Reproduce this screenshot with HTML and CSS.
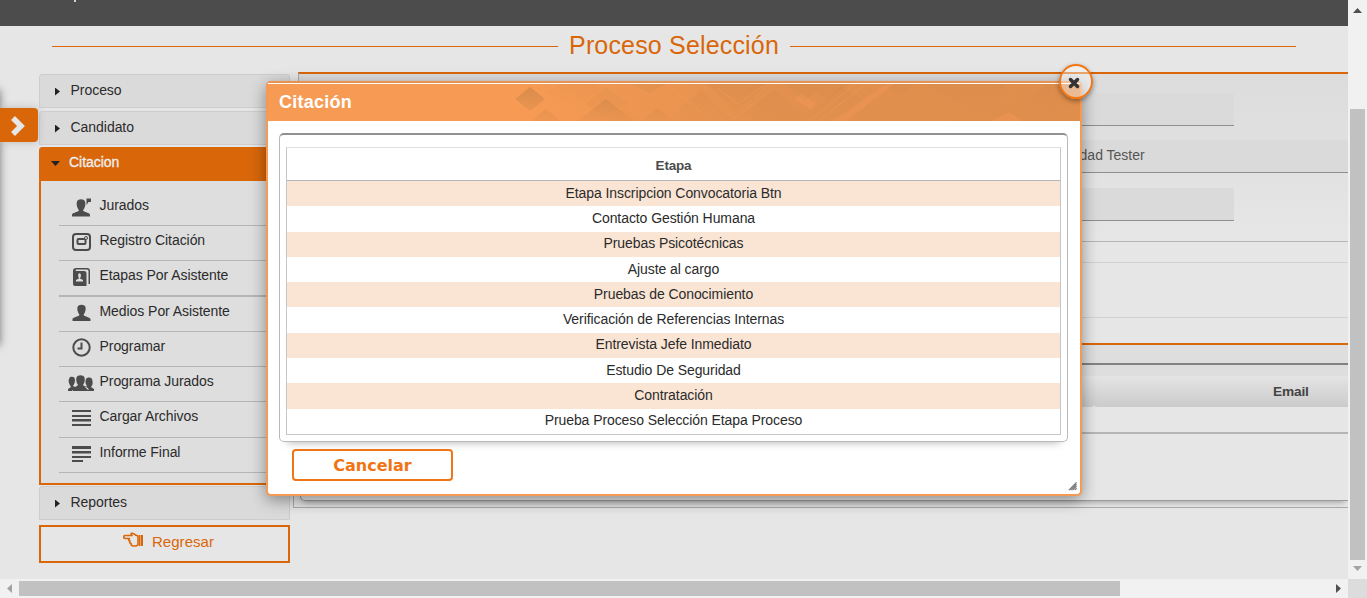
FILE: index.html
```html
<!DOCTYPE html>
<html lang="es">
<head>
<meta charset="utf-8">
<title>Proceso Selección</title>
<link rel="stylesheet" href="styles.css">
</head>
<body>
<div class="window">
  <div class="page">
    <header class="topbar"><span class="topbar-mark"></span></header>
    <div class="page-title"><h1>Proceso Selección</h1></div>
    <div class="columns">
      <nav class="sidebar">
        <a class="group"><i class="caret"></i>Proceso</a>
        <a class="group second"><i class="caret"></i>Candidato</a>
        <a class="group active"><i class="caret down"></i>Citacion</a>
        <ul class="submenu">
          <li><svg viewBox="0 0 26 20"><path d="M4 19.500v-2c1-2 5-2 7-4-2-3-3-6-2-9 1-3 7-3 8 0 1 3 0 6-2 9 2 2 6 2 7 4v2zM18.500 1.500H23V5h-2.500l-2 3z"/></svg>Jurados</li>
          <li><svg viewBox="0 0 26 20"><rect class="ln" x="5" y="2" width="17" height="16" rx="3"/><rect class="ln" x="9.500" y="7" width="8" height="5" rx="1"/><circle class="thin" cx="18" cy="6" r="1.500"/></svg>Registro Citación</li>
          <li><svg viewBox="0 0 26 20"><path d="M5 4q0-3 3-3h11q3 0 3 3v13h-1.500V4q0-1.500-1.500-1.500H8Q7 3.200 8 4h8q2.500 0 2.500 2v13H7q-2 0-2-2z"/><path class="cut" d="M8 14.500V13l3-1.500q-1.300-3-.7-4.500.9-1.500 2.400 0 .8 1.500-.7 4.500l3 1.500v1.500z"/></svg>Etapas Por Asistente</li>
          <li><svg viewBox="0 0 26 20"><path d="M4.500 18v-2c1-2 5-2 7-4-2-3-2.500-6-2-8 1-3 7-3 8 0 .5 2 0 5-2 8 2 2 6 2 7 4v2z"/></svg>Medios Por Asistente</li>
          <li><svg viewBox="0 0 26 20"><circle class="ln" cx="13.500" cy="9.500" r="8.200"/><path class="ln" d="M13.500 4.500v6H9.500"/></svg>Programar</li>
          <li><svg viewBox="0 0 26 20"><path d="M5 18v-2c1-2 3-2 5-4-2-3-2-5-1.500-7.500 1-3 7-3 8 0 .5 2.500.5 4.500-1.500 7.500 2 2 4.500 2 5.500 4v2zM0 18v-2l3-2C1 11 0 8 1 6l1-2c3-1 5 0 5 3s-1 4-2 6l2 1-3 4zM26 18v-2l-3-2c2-2 2-5 1-8-1-2-5-2-6 0-1 3-.5 5 1 7l-2 1 4 4z"/></svg>Programa Jurados</li>
          <li><svg viewBox="0 0 26 20"><path d="M4 2h19v2H4zM4 7h19v2H4zM4 11h19v2.500H4zM4 16h19v2H4z"/></svg>Cargar Archivos</li>
          <li><svg viewBox="0 0 26 20"><path d="M4 2h19v3H4zM4 7h19v2.500H4zM4 12h19v2H4zM4 16h11v2H4z"/></svg>Informe Final</li>
        </ul>
        <a class="group reports"><i class="caret"></i>Reportes</a>
        <a class="back"><svg viewBox="0 0 20 16"><path d="M9 3.500H2.500C0 3.500 0 6.500 2.500 6.500H7c-2 .7-1.500 2.500 0 2.700-.8 1.500 0 2.200 1 2.300 0 1.700.8 2.500 2.500 2.500H13l2-1V4l-2.500-1C11 1.500 9.500 1 8.500 1.300 7.500 2 9 3 9 3.500z"/><path class="cuff" d="M16 3h1.500v11H16zM18 3h2v11h-2z"/></svg>Regresar</a>
      </nav>
      <main class="content">
        <section class="form-panel">
          <div class="field short"></div>
          <div class="field full">Universidad Tester</div>
          <div class="field short third"></div>
        </section>
        <div class="band band-a"></div>
        <div class="band band-b"></div>
        <div class="band band-c"></div>
        <section class="list-panel">
          <div class="list-box">
            <div class="list-head"><div class="th"></div><div class="th email">Email</div></div>
            <div class="list-line"></div>
          </div>
        </section>
      </main>
    </div>

    <div class="drawer-shade"></div>
    <button class="drawer-tab"><svg viewBox="0 0 16 22"><path d="M3 3l8 8-8 8"/></svg></button>

    <div class="dialog">
      <div class="dialog-head">
        <svg class="pattern" viewBox="0 0 564 37" preserveAspectRatio="none">
          <defs>
            <linearGradient id="fade"><stop offset="0" stop-color="#d98b4b" stop-opacity="0"/><stop offset=".45" stop-color="#db8c4c" stop-opacity=".7"/><stop offset="1" stop-color="#db8b4a" stop-opacity=".85"/></linearGradient>
            <linearGradient id="dn" x2="0" y2="1"><stop offset="0" stop-color="#cb8548" stop-opacity=".7"/><stop offset="1" stop-color="#dd8c4c" stop-opacity=".25"/></linearGradient>
          </defs>
          <path fill="url(#fade)" d="M0 0h564v37H0z"/>
          <g fill="url(#dn)">
            <path d="M-1 15L14 3l15 12-15 12zM15 37l15-12 15 12z"/>
            <path opacity=".8" d="M62 37l28-22 28 22zM126 37l15-13 16 13z"/>
            <path opacity=".35" d="M69 20L90 3l22 16-22 15zM115 0h36l-18 9zM88 37l20-13 18 13z"/>
            <path opacity=".15" d="M30 8L45 0h35l6 6-20 12-12 5z"/>
            <path opacity=".4" d="M150 37l36-32 35 32zM190 0h60l-29 28zM225 33l31-28 33 27-14 5h-36zM270 0h62l-20 16-12-8-12 10z"/>
            <path opacity=".3" d="M282 37l44-35 50 35zM353 37l20-19 24 19zM366 0h34l-17 12zM410 0h78l-8 20-15 12zM465 32l18-15 16 13 30-30h35v5l-35 32h-14l-14-9-14 9z"/>
          </g>
          <path fill="#fa9c58" opacity=".35" d="M476 37l17-9 13 9zM286 10l14 10-6 5-16-10zM330 28l40-28h8l-48 37h-14z"/>
          <path fill="none" stroke="#fa9c58" stroke-width=".7" opacity=".6" d="M184 6l34 29 39-30M150 0l40 32M292 37l48-37M302 37l48-37M201 4l21 16 25-18"/>
        </svg>
        <h2>Citación</h2>
      </div>
      <div class="dialog-body">
        <div class="frame">
          <table class="stages">
            <thead><tr><th>Etapa</th></tr></thead>
            <tbody>
              <tr><td>Etapa Inscripcion Convocatoria Btn</td></tr>
              <tr><td>Contacto Gestión Humana</td></tr>
              <tr><td>Pruebas Psicotécnicas</td></tr>
              <tr><td>Ajuste al cargo</td></tr>
              <tr><td>Pruebas de Conocimiento</td></tr>
              <tr><td>Verificación de Referencias Internas</td></tr>
              <tr><td>Entrevista Jefe Inmediato</td></tr>
              <tr><td>Estudio De Seguridad</td></tr>
              <tr><td>Contratación</td></tr>
              <tr><td>Prueba Proceso Selección Etapa Proceso</td></tr>
            </tbody>
          </table>
        </div>
        <button class="cancel">Cancelar</button>
      </div>
      <button class="close"><svg viewBox="0 0 12 12"><path d="M2.500 2.500l7 7M9.500 2.500l-7 7"/></svg></button>
      <svg class="grip" viewBox="0 0 10 10"><path d="M1 9.500L9.500 1M3 9.500L9.500 3M5 9.500L9.500 5M7.500 9.500l2-2"/></svg>
    </div>
  </div>

  <div class="vbar"><i class="up"></i><div class="vthumb"></div><i class="dn"></i></div>
  <div class="hbar"><i class="lt"></i><div class="hthumb"></div><i class="rt"></i></div>
  <div class="corner"></div>
</div>
</body>
</html>
```
FILE: styles.css
```css
* { box-sizing: border-box; }
body { margin: 0; font-family: "Liberation Sans", Arial, sans-serif; font-size: 14px; color: #2b2b2b; }
button { font: inherit; padding: 0; margin: 0; }
.window { display: grid; grid-template: 579px 19px / 1348px 19px; width: 1367px; height: 598px; overflow: hidden; }
.page { position: relative; overflow: hidden; background: #e6e6e6; }

.topbar { height: 26px; background: #4c4c4c; }
.topbar-mark { display: block; width: 2px; height: 2px; margin-left: 74px; background: #c9d3dc; }
.page-title { display: flex; align-items: center; gap: 11px; height: 40px; padding: 0 52px; }
.page-title::before, .page-title::after { content: ""; flex: 1; height: 1px; margin-top: 1px; background: #d9670a; }
.page-title h1 { margin: 0; padding-bottom: 2px; font-size: 25px; font-weight: 400; letter-spacing: .17px; line-height: 36px; color: #d9670a; }

.columns { display: flex; margin-top: 6px; padding-left: 39px; }
.sidebar { flex: none; width: 251px; padding-top: 2px; }
.group { display: flex; align-items: center; height: 34px; padding: 0 0 2px 14px; border: 1px solid #cdcdcd; border-radius: 3px 3px 0 0; background: #dadada; letter-spacing: -.04px; }
.second { margin-top: 3px; }
.active { margin-top: 2px; padding-bottom: 4px; padding-left: 11px; border-color: #d9670a; background: #d9670a; color: #eee; -webkit-text-stroke: .3px #eee; }
.reports { margin-top: 1px; }
.caret { width: 5px; height: 8px; margin: 3px 10.500px 0 1px; background: #222; clip-path: polygon(0 0, 100% 50%, 0 100%); }
.caret.down { width: 9px; height: 5px; margin: 3px 9px 0 0; clip-path: polygon(0 0, 100% 0, 50% 100%); }
.submenu { list-style: none; height: 304px; margin: 0; padding: 10px 0 0 18px; border: 2px solid #d9670a; border-top: 0; background: #dedede; }
.submenu li { display: flex; height: 35.1px; padding: 6px 0 0 9px; border-bottom: 1px solid #b5b5b5; line-height: 17px; letter-spacing: -.06px; }
.submenu li:nth-child(3) { height: 36px; border-bottom-width: 2px; }
.submenu svg { flex: none; width: 26px; height: 20px; margin: 0 5.500px 0 0; fill: #4c4c4c; }
.submenu .ln { fill: none; stroke: #4c4c4c; stroke-width: 2; }
.submenu .thin { fill: #dedede; stroke: #4c4c4c; stroke-width: 1; }
.submenu .cut { fill: #dedede; }
.back { display: flex; align-items: center; justify-content: center; gap: 9px; height: 38px; margin-top: 5px; padding: 0 0 5px 8px; border: 2px solid #d9670a; font-size: 15px; letter-spacing: .05px; color: #d9670a; }
.back svg { width: 20px; height: 16px; margin-bottom: 4px; fill: none; stroke: #d9670a; stroke-width: 1.6; }
.back .cuff { fill: #d9670a; stroke: none; }

.content { width: 1055px; flex: none; margin-left: 3px; height: 436px; }
.form-panel { height: 170px; margin-left: 5px; padding-top: 19px; border-top: 2px solid #d9670a; border-left: 1px solid #aaa; border-bottom: 1px solid #b5b5b5; background: linear-gradient(#dcdcdc, #e6e6e6); }
.field { height: 33px; border-bottom: 1px solid #8e8e8e; border-radius: 3px 3px 0 0; background: #dadada; }
.short { width: 935px; }
.full { margin-top: 14px; padding-left: 730px; line-height: 31px; color: #555; }
.third { margin-top: 15px; }
.band { border-bottom: 1px solid #d2d2d2; }
.band-a { height: 21px; }
.band-b { height: 55px; }
.band-c { height: 25px; border: 0; }
.list-panel { height: 165px; padding: 18px 0 0 6px; border: solid #aaa; border-width: 2px 0 1px 1px; border-top-color: #d9670a; background: linear-gradient(#dedede 60px, #e6e6e6 60px); }
.list-box { height: 138px; border: solid #9b9b9b; border-width: 2px 0 1px 1px; border-top-color: #828282; border-radius: 5px 0 0 5px; padding-top: 11px; box-shadow: 0 4px 6px -3px #999; background: linear-gradient(#dedede 0 11px, #e6e6e6 11px); }
.list-head { display: flex; height: 31px; }
.th { flex: none; width: 793px; border-radius: 3px; background: linear-gradient(#e4e4e4, #cbcbcb); }
.email { width: 400px; padding-left: 179px; font-size: 13.700px; font-weight: 700; line-height: 32px; letter-spacing: -.15px; color: #444; }
.list-line { height: 27px; border-bottom: 2px solid #b5b5b5; }

.drawer-shade { position: absolute; left: -10px; top: 90px; width: 10px; height: 255px; box-shadow: 0 0 9px #777; }
.drawer-tab { position: absolute; left: 0; top: 108px; width: 38px; height: 34px; border: 0; border-radius: 0 4px 4px 0; background: #d9670a; box-shadow: 0 0 8px #bbb; }
.drawer-tab svg { display: block; width: 16px; height: 22px; margin: 2px 0 0 10px; fill: none; stroke: #e6e6e6; stroke-width: 5.500; }

.dialog { position: absolute; left: 266px; top: 81px; width: 816px; height: 415px; border: 2px solid #f59a54; border-top-color: #ea9150; border-radius: 5px; background: #fff; box-shadow: 0 4px 16px rgba(0,0,0,.4); }
.dialog-head { position: relative; display: flex; align-items: center; height: 38px; padding: 0 0 2px 11px; border-top: 1px solid #fff; background: #f79b54; }
.dialog-head h2 { position: relative; margin: 0; font-size: 18px; line-height: 22px; letter-spacing: .25px; color: #fff; }
.pattern { position: absolute; right: 0; top: 0; width: 564px; height: 37px; }
.dialog-body { padding: 12px 12px 0 11px; }
.frame { height: 309px; padding: 12px 6px 0; border: 1px solid #b9b9b9; border-top: 2px solid #919191; border-radius: 5px; box-shadow: 0 8px 8px -8px #aaa; }
.stages { width: 775px; border-collapse: separate; border-spacing: 0; border: 1px solid #c6c6c6; border-top-color: #e0e0e0; text-align: center; }
.stages th { height: 33px; padding: 2px 0 0; border-bottom: 1px solid #b5b5b5; font-size: 13.500px; letter-spacing: -.2px; color: #4c4c4c; }
.stages td { height: 25.300px; padding: 0 0 2px; line-height: 20px; letter-spacing: -.08px; }
.stages tbody tr:nth-child(odd) { background: #fae5d5; }
.cancel { display: block; width: 161px; height: 32px; margin: 7px 0 0 13px; padding-top: 1px; border: 2px solid #ee7518; border-radius: 4px; background: #fff; font: 700 16px "DejaVu Sans", sans-serif; color: #f07414; }
.close { position: absolute; left: 791px; top: -19px; width: 34px; height: 35px; border: 2px solid #f27713; border-radius: 50%; background: rgba(255,255,255,.4); box-shadow: 0 2px 5px rgba(0,0,0,.4); }
.close svg { display: block; width: 12px; height: 12px; margin: 3px 0 0 7px; fill: none; stroke: #333; stroke-width: 3.500; stroke-linecap: round; }
.grip { position: absolute; right: 3px; bottom: 3px; width: 9px; height: 10px; fill: none; stroke: #777; stroke-width: 1.300; }

.vbar { display: flex; flex-direction: column; align-items: center; padding-top: 8px; background: #f1f1f1; }
.vthumb { width: 15px; height: 451px; margin-top: 96px; background: #c1c1c1; }
.vbar i { width: 9px; height: 5px; background: #505050; clip-path: polygon(50% 0, 100% 100%, 0 100%); }
.vbar .dn { margin-top: 6px; background: #a3a3a3; clip-path: polygon(0 0, 100% 0, 50% 100%); }
.hbar { display: flex; align-items: center; padding-left: 7px; background: #f1f1f1; }
.hthumb { width: 1101px; height: 15px; margin-left: 7px; background: #c1c1c1; }
.hbar i { width: 5px; height: 9px; background: #a3a3a3; clip-path: polygon(100% 0, 100% 100%, 0 50%); }
.hbar .rt { margin-left: 216px; background: #505050; clip-path: polygon(0 0, 100% 50%, 0 100%); }
.corner { background: #dcdcdc; }
```
